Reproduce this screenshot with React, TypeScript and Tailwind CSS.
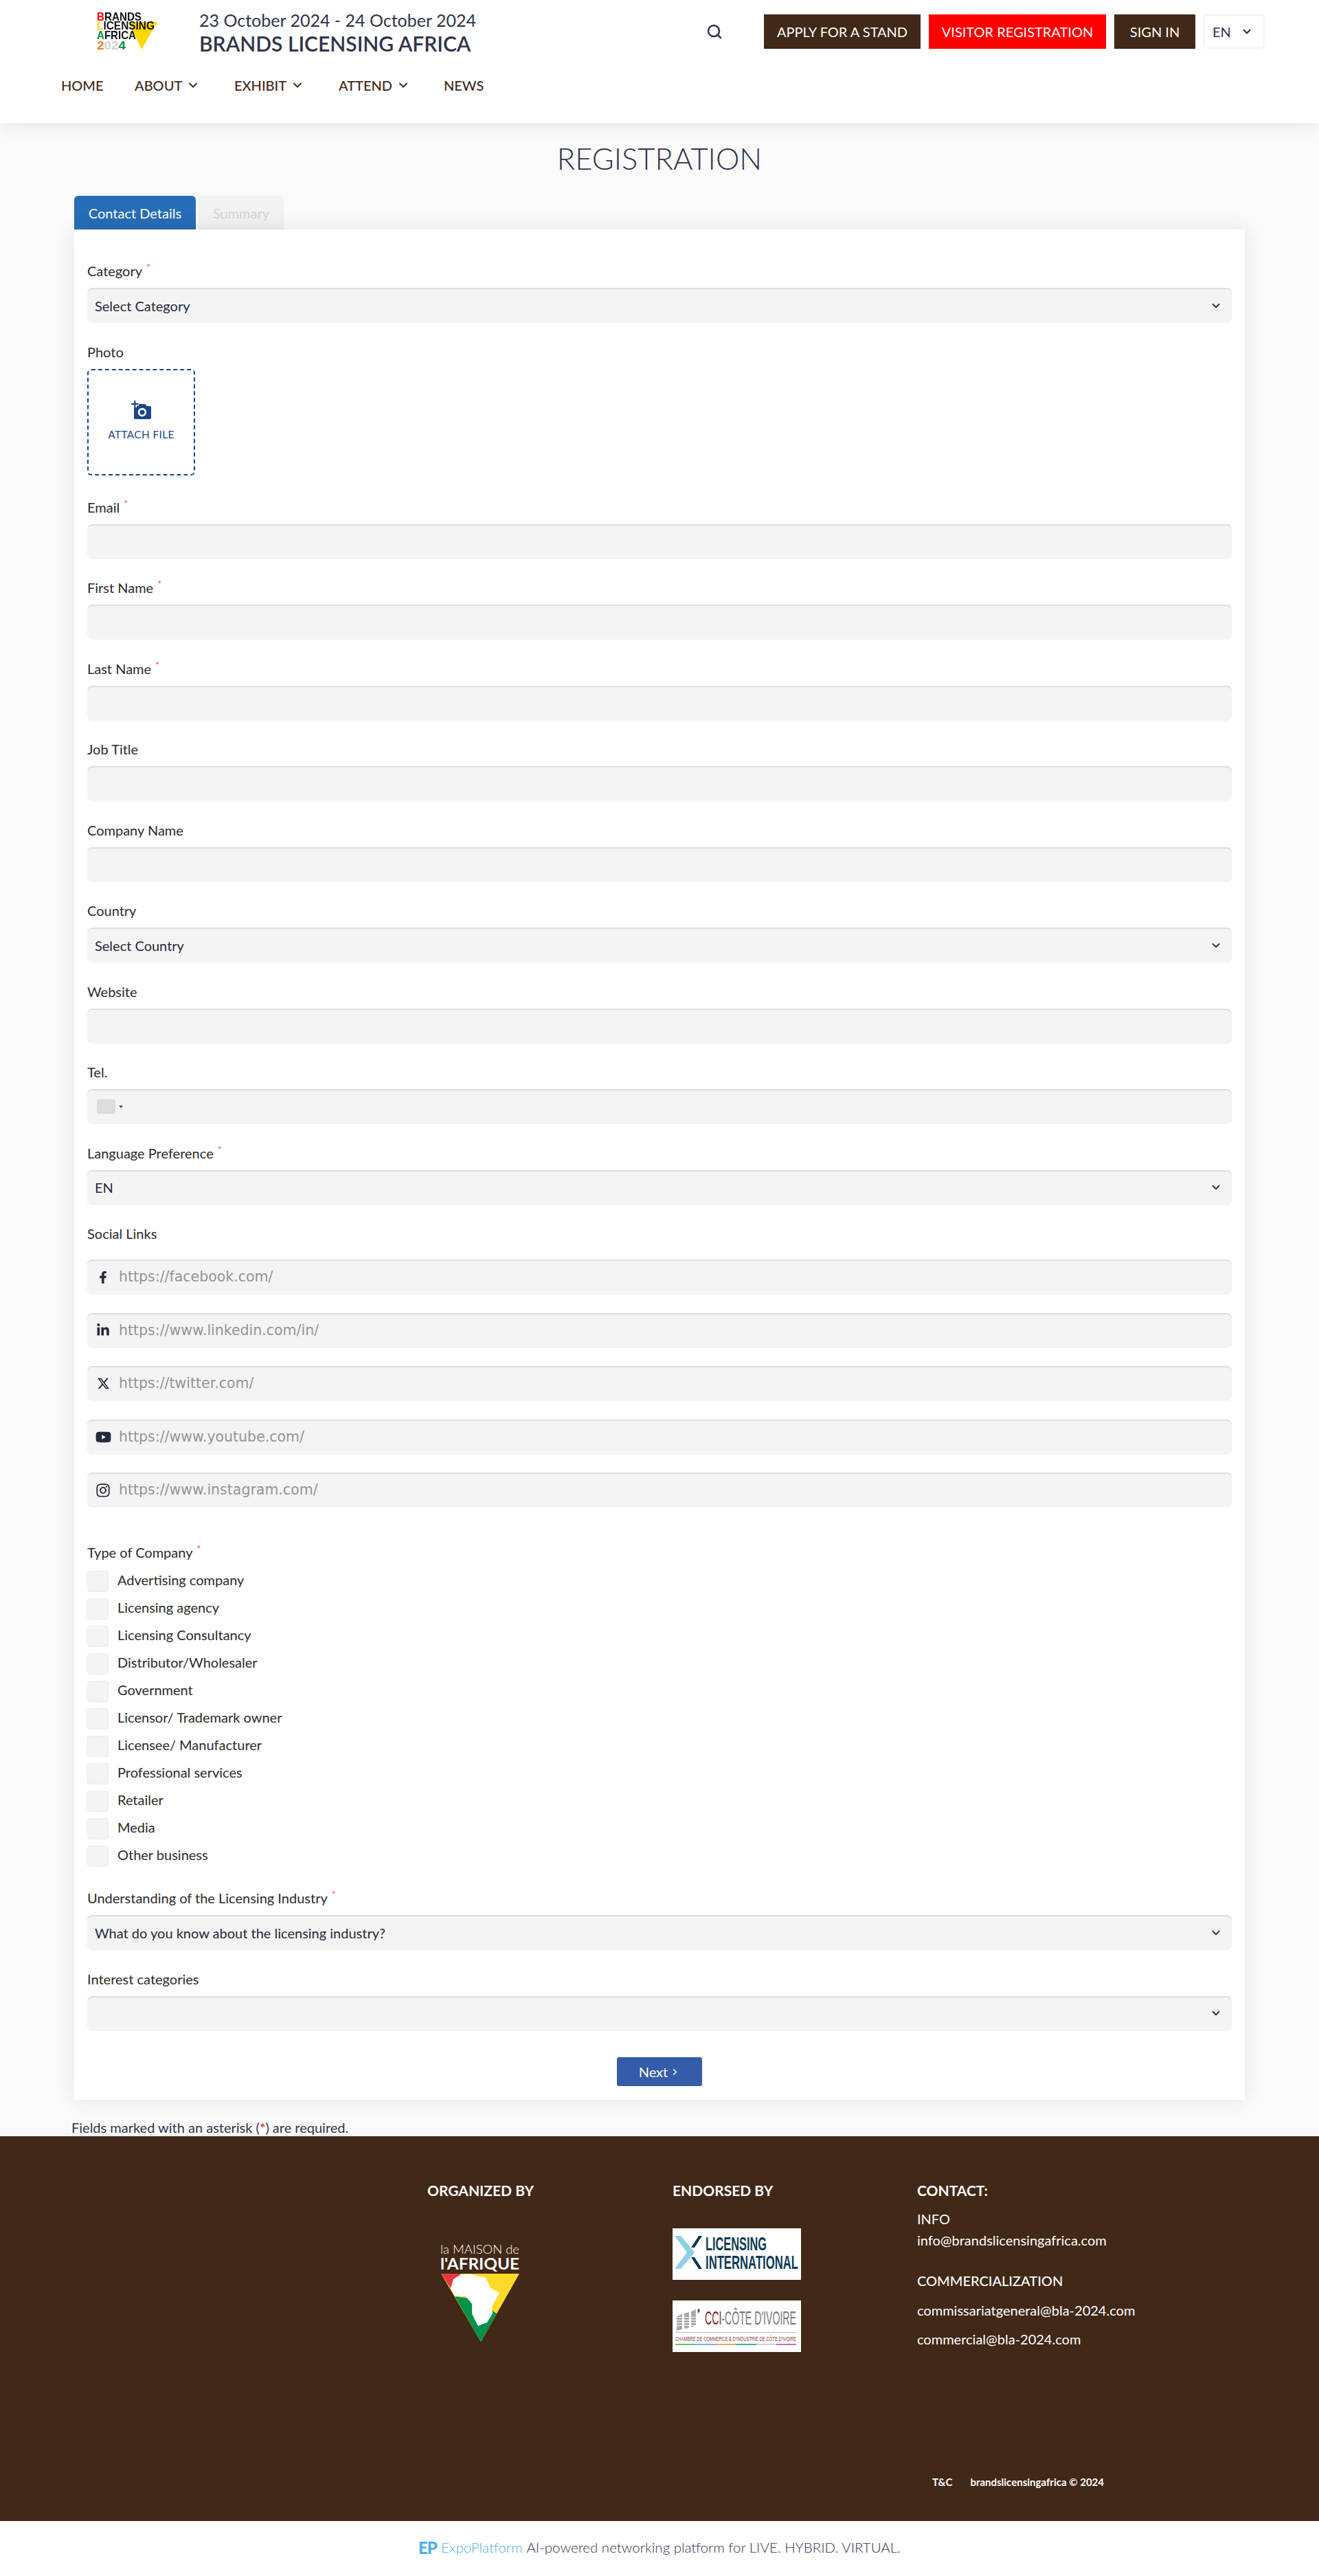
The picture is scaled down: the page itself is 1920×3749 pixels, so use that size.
import React from 'react';
import { ChevronDown, ChevronRight, Search } from 'lucide-react';
import { FaFacebookF, FaLinkedinIn, FaYoutube, FaInstagram } from 'react-icons/fa';
import { FaXTwitter } from 'react-icons/fa6';

const navItems = [
  { label: 'HOME', caret: false, width: 'w-[64px]', gap: 'mr-[43px]' },
  { label: 'ABOUT', caret: true, width: 'w-[106px]', gap: 'mr-[39px]' },
  { label: 'EXHIBIT', caret: true, width: 'w-[106px]', gap: 'mr-[46px]' },
  { label: 'ATTEND', caret: true, width: 'w-[106px]', gap: 'mr-[47px]' },
  { label: 'NEWS', caret: false, width: 'w-[60px]', gap: '' },
];

const companyTypes = [
  'Advertising company',
  'Licensing agency',
  'Licensing Consultancy',
  'Distributor/Wholesaler',
  'Government',
  'Licensor/ Trademark owner',
  'Licensee/ Manufacturer',
  'Professional services',
  'Retailer',
  'Media',
  'Other business',
];

const socials = [
  { icon: <FaFacebookF size={18} />, placeholder: 'https://facebook.com/' },
  { icon: <FaLinkedinIn size={20} />, placeholder: 'https://www.linkedin.com/in/' },
  { icon: <FaXTwitter size={19} />, placeholder: 'https://twitter.com/' },
  { icon: <FaYoutube size={23} />, placeholder: 'https://www.youtube.com/' },
  { icon: <FaInstagram size={22} />, placeholder: 'https://www.instagram.com/' },
];

const inputBox =
  'h-[51px] w-full bg-[#f4f4f4] rounded-[7px] shadow-[inset_0_2px_1px_rgba(0,0,0,0.09)] flex items-center';

const Label = ({ text, required }: { text: string; required?: boolean }) => (
  <div className="h-[38px] text-[20px] leading-[26px] text-[#2b2b2b]">
    {text}
    {required && <span className="ml-[6px] relative -top-[8px] text-[14px] text-[#ff4d6d]">*</span>}
  </div>
);

const TextField = ({ label, required }: { label: string; required?: boolean }) => (
  <div className="mb-[28.5px]">
    <Label text={label} required={required} />
    <div className={inputBox} />
  </div>
);

const SelectField = ({ label, value, required }: { label: string; value?: string; required?: boolean }) => (
  <div className="mb-[28.5px]">
    <Label text={label} required={required} />
    <div className={`${inputBox} justify-between pl-[11px] pr-[14px]`}>
      <span className="text-[20px] text-[#252a3a]">{value}</span>
      <ChevronDown size={18} strokeWidth={2.5} className="text-[#2d3344]" />
    </div>
  </div>
);

const BlaLogo = () => (
  <svg viewBox="0 0 90 56" className="w-[90px] h-[56px] overflow-visible blur-[0.4px]">
    <polygon points="46,14 88,14 65,54" fill="#ffd800" />
    <g fontFamily="'Liberation Sans', sans-serif" fontWeight="700" fontSize="17">
      <text x="0" y="12" fill="#111" textLength="65" lengthAdjust="spacingAndGlyphs"><tspan fill="#f00">B</tspan>RANDS</text>
      <text x="0" y="25" fill="#111" textLength="84" lengthAdjust="spacingAndGlyphs"><tspan fill="#ffd800">L</tspan>ICENSING</text>
      <text x="0" y="39" fill="#111" textLength="57" lengthAdjust="spacingAndGlyphs"><tspan fill="#0a8f3c">A</tspan>FRICA</text>
      <text x="0" y="54" textLength="42" lengthAdjust="spacingAndGlyphs"><tspan fill="#f47c20">2</tspan><tspan fill="#d0d0d0">02</tspan><tspan fill="#0a8f3c">4</tspan></text>
    </g>
  </svg>
);

const MaisonLogo = () => (
  <svg viewBox="0 0 116 142" className="w-[116px] h-[142px]">
    <text x="0" y="14" fill="#fff" fontFamily="Lato, sans-serif" fontSize="18" fontWeight="300" textLength="115" lengthAdjust="spacingAndGlyphs">la MAISON de</text>
    <text x="0" y="37" fill="#fff" fontFamily="Lato, sans-serif" fontSize="23" fontWeight="700" textLength="115" lengthAdjust="spacingAndGlyphs">l'AFRIQUE</text>
    <polygon points="1,43 115,43 59,142" fill="#ffd927" />
    <polygon points="1,43 30,43 16,66" fill="#e93a41" />
    <polygon points="21,76 50,80 82,101 59,142" fill="#00924a" />
    <path d="M30 44 L44 44 L66 49 L73 64 L86 71 L80 82 L75 91 L76 101 L68 114 L55 119 L50 110 L46 101 L46 87 L37 76 L21 76 L15 64 L19 51 Z" fill="#fff" />
  </svg>
);

const LicensingLogo = () => (
  <svg viewBox="0 0 187 75" className="w-[187px] h-[75px] bg-white">
    <path d="M3 11 H12 L32 35 L12 59 H3 L21 35 Z" fill="#8fd0e6" />
    <path d="M38 11 H43 L32 28 H27 Z M27 42 H32 L43 59 H38 Z" fill="#0e3a55" />
    <text x="48" y="32" fill="#0e3a55" fontFamily="'Liberation Sans', sans-serif" fontWeight="700" fontSize="28" textLength="89" lengthAdjust="spacingAndGlyphs">LICENSING</text>
    <text x="48" y="59" fill="#0e3a55" fontFamily="'Liberation Sans', sans-serif" fontWeight="700" fontSize="28" textLength="135" lengthAdjust="spacingAndGlyphs">INTERNATIONAL</text>
  </svg>
);

const CciLogo = () => (
  <svg viewBox="0 0 187 75" className="w-[187px] h-[75px] bg-white">
    <g fill="#a9a9a9">
      <polygon points="6,23 14,20 14,42 6,44" />
      <polygon points="17,19 24,17 24,40 17,41" />
      <polygon points="27,16 34,13 34,36 27,39" />
    </g>
    <g fill="#fff">
      <rect x="5" y="24" width="30" height="1" />
      <rect x="5" y="28" width="30" height="1" />
      <rect x="5" y="32" width="30" height="1" />
      <rect x="5" y="36" width="30" height="1" />
    </g>
    <ellipse cx="38" cy="15" rx="1.5" ry="3" fill="#555" />
    <text x="47" y="35" fill="#777" fontFamily="'Liberation Sans', sans-serif" fontSize="28" textLength="133" lengthAdjust="spacingAndGlyphs"><tspan fill="#7a1f22">CCI</tspan>-CÔTE D'IVOIRE</text>
    <rect x="4" y="46" width="176" height="1" fill="#bbb" />
    <text x="4" y="59" fill="#8a3b3e" fontFamily="'Liberation Sans', sans-serif" fontSize="9" textLength="176" lengthAdjust="spacingAndGlyphs">CHAMBRE DE COMMERCE &amp; D'INDUSTRIE DE CÔTE D'IVOIRE</text>
    <rect x="4" y="63" width="29" height="2" fill="#5cc36e" />
    <rect x="33" y="63" width="30" height="2" fill="#6db2e8" />
    <rect x="63" y="63" width="29" height="2" fill="#f5a45c" />
    <rect x="92" y="63" width="30" height="2" fill="#4aa99a" />
    <rect x="122" y="63" width="29" height="2" fill="#cfd3d6" />
    <rect x="151" y="63" width="29" height="2" fill="#c46cc4" />
  </svg>
);

const CameraPlus = () => (
  <svg viewBox="0 0 30 28" className="w-[30px] h-[28px]" fill="#1d4587">
    <path d="M4 8 H9 V5 H20 L23 8 H27 Q29 8 29 10 V25 Q29 27 27 27 H6 Q4 27 4 25 Z" />
    <circle cx="16" cy="17" r="6.2" fill="#fff" />
    <circle cx="16" cy="17" r="3.6" />
    <rect x="0" y="2" width="11" height="5.5" fill="#fff" />
    <rect x="3" y="0" width="5" height="10" fill="#fff" />
    <rect x="0" y="3.8" width="10.6" height="2.2" />
    <rect x="4.2" y="0" width="2.2" height="10" />
  </svg>
);

export default function App() {
  return (
    <div className="w-[1920px] h-[3749px] bg-[#fafafa] font-['Lato',sans-serif] flex flex-col overflow-hidden">
      {/* Header */}
      <header className="h-[179px] shrink-0 bg-white shadow-[0_4px_24px_rgba(0,0,0,0.08)] relative z-10">
        <div className="h-[92px] flex items-start pt-[18px]">
          <div className="ml-[141px] mr-[59px]"><BlaLogo /></div>
          <div className="text-[#30344a] -mt-[4px]">
            <div className="text-[25px] leading-[30px]">23 October 2024 - 24 October 2024</div>
            <div className="text-[30px] leading-[38px] font-semibold">BRANDS LICENSING AFRICA</div>
          </div>
          <div className="ml-auto flex items-center pt-[3px] pr-[79px]">
            <Search size={24} strokeWidth={2.5} className="text-[#30344a] mr-[60px]" />
            <button className="h-[50px] w-[228px] bg-[#412817] text-white text-[20px]">APPLY FOR A STAND</button>
            <button className="h-[50px] w-[258px] ml-[12px] bg-[#ff0000] text-white text-[20px]">VISITOR REGISTRATION</button>
            <button className="h-[50px] w-[118px] ml-[12px] bg-[#412817] text-white text-[20px]">SIGN IN</button>
            <div className="h-[50px] w-[89px] ml-[12px] border-2 border-[#f2f2f2] rounded-[6px] flex items-center justify-between pl-[11px] pr-[15px] text-[20px] text-[#30344a]">
              EN
              <ChevronDown size={18} strokeWidth={3} />
            </div>
          </div>
        </div>
        <nav className="flex items-center h-[64px] pl-[89px] text-[20px] font-medium text-[#412817]">
          {navItems.map(item => (
            <div key={item.label} className={`${item.width} ${item.gap} flex items-center gap-[6px] whitespace-nowrap`}>
              {item.label}
              {item.caret && <ChevronDown size={20} strokeWidth={2.5} />}
            </div>
          ))}
        </nav>
      </header>

      {/* Title */}
      <h1 className="text-[43.5px] leading-[50px] font-light text-[#30344a] text-center mt-[26px]">REGISTRATION</h1>

      {/* Tabs */}
      <div className="flex ml-[108px] mt-[30px] h-[49px] gap-[4px]">
        <div className="w-[177px] bg-[#266db7] rounded-t-[6px] text-white text-[20px] flex items-center justify-center">Contact Details</div>
        <div className="w-[124px] bg-[#f2f2f2] border border-[#eeeeee] rounded-t-[6px] text-[#d2d2d2] text-[20px] flex items-center justify-center">Summary</div>
      </div>

      {/* Form card */}
      <main className="w-[1704px] ml-[108px] shrink-0 bg-white shadow-[0_0_30px_rgba(0,0,0,0.09)] pt-[47px] pb-[20px] px-[19px]">
        <SelectField label="Category" value="Select Category" required />
        <Label text="Photo" />
        <div className="w-[157px] h-[155px] border-2 border-dashed border-[#1d4587] rounded-[6px] flex flex-col items-center justify-center mb-[33px]">
          <CameraPlus />
          <span className="mt-[10px] text-[15.5px] text-[#1d4587] tracking-[0.3px]">ATTACH FILE</span>
        </div>
        <TextField label="Email" required />
        <TextField label="First Name" required />
        <TextField label="Last Name" required />
        <TextField label="Job Title" />
        <TextField label="Company Name" />
        <SelectField label="Country" value="Select Country" />
        <TextField label="Website" />
        <div className="mb-[28.5px]">
          <Label text="Tel." />
          <div className={`${inputBox} pl-[14px] gap-[5px]`}>
            <div className="w-[27px] h-[21px] bg-[#dcdcdc] rounded-[3px]" />
            <div className="w-0 h-0 border-x-[3px] border-x-transparent border-t-[4px] border-t-[#555]" />
          </div>
        </div>
        <SelectField label="Language Preference" value="EN" required />
        <div className="h-[51px] text-[20px] leading-[26px] text-[#2b2b2b]">Social Links</div>
        {socials.map(s => (
          <div key={s.placeholder} className={`${inputBox} mb-[26.5px]`}>
            <div className="w-[46px] flex justify-center text-[#252a3a]">{s.icon}</div>
            <span className="font-['DejaVu_Sans',sans-serif] text-[20.5px] text-[#949494]">{s.placeholder}</span>
          </div>
        ))}
        <div className="mt-[52px] h-[40px]"><Label text="Type of Company" required /></div>
        {companyTypes.map(type => (
          <div key={type} className="h-[40px] flex items-start">
            <div className="w-[31px] h-[31px] bg-[#f4f4f4] border border-[#ececec] rounded-[4px] mr-[13px]" />
            <span className="text-[20px] leading-[26px] text-[#2b2b2b]">{type}</span>
          </div>
        ))}
        <div className="mt-[23px]">
          <SelectField label="Understanding of the Licensing Industry" value="What do you know about the licensing industry?" required />
        </div>
        <SelectField label="Interest categories" />
        <button className="mt-[38.5px] mx-auto w-[124px] h-[42px] bg-[#345ca8] rounded-[3px] text-white text-[20px] flex items-center justify-center gap-[3px]">
          Next <ChevronRight size={15} strokeWidth={2.5} />
        </button>
      </main>

      <p className="ml-[104px] mt-[28px] h-[25px] text-[20px] leading-[24px] text-[#30344a]">
        Fields marked with an asterisk (<span className="text-[#ff0000]">*</span>) are required.
      </p>

      {/* Footer */}
      <footer className="h-[560px] shrink-0 bg-[#412817] text-white flex pl-[622px] pt-[67px] relative">
        <div className="w-[357px]">
          <div className="text-[21px] font-bold leading-[24px]">ORGANIZED BY</div>
          <div className="mt-[66px] ml-[19px]"><MaisonLogo /></div>
        </div>
        <div className="w-[356px]">
          <div className="text-[21px] font-bold leading-[24px]">ENDORSED BY</div>
          <div className="mt-[43px]"><LicensingLogo /></div>
          <div className="mt-[30px]"><CciLogo /></div>
        </div>
        <div className="text-[20px]">
          <div className="text-[21px] font-bold leading-[24px]">CONTACT:</div>
          <div className="mt-[14px] leading-[31px]">INFO</div>
          <div className="leading-[31px]">info@brandslicensingafrica.com</div>
          <div className="mt-[28px] leading-[31px] font-medium">COMMERCIALIZATION</div>
          <div className="mt-[12px] leading-[31px]">commissariatgeneral@bla-2024.com</div>
          <div className="mt-[11px] leading-[31px]">commercial@bla-2024.com</div>
        </div>
        <div className="absolute left-[1357px] top-[493px] flex gap-[26px] text-[15px] font-bold leading-[20px]">
          <span>T&amp;C</span>
          <span>brandslicensingafrica © 2024</span>
        </div>
      </footer>

      {/* Platform line */}
      <div className="h-[80px] shrink-0 bg-white flex items-center justify-center text-[20.5px] font-light text-[#30344a] gap-[6px] pb-[3px]">
        <span className="font-black text-[24px] text-[#4daee8] tracking-[-1px]">EP</span>
        <span className="text-[#4daee8]">ExpoPlatform</span>
        <span>AI-powered networking platform for LIVE. HYBRID. VIRTUAL.</span>
      </div>
    </div>
  );
}
